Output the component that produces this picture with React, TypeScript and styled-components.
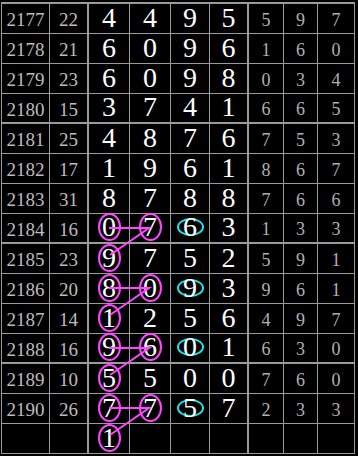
import { FC } from 'react';
import styled, { createGlobalStyle } from 'styled-components';

type Mark = 'none' | 'pink' | 'cyan';

interface RowData {
  issue: string;
  sum: string;
  big: string[];
  small: string[];
  marks?: Mark[];
}

const rows: RowData[] = [
  { issue: '2177', sum: '22', big: ['4', '4', '9', '5'], small: ['5', '9', '7'] },
  { issue: '2178', sum: '21', big: ['6', '0', '9', '6'], small: ['1', '6', '0'] },
  { issue: '2179', sum: '23', big: ['6', '0', '9', '8'], small: ['0', '3', '4'] },
  { issue: '2180', sum: '15', big: ['3', '7', '4', '1'], small: ['6', '6', '5'] },
  { issue: '2181', sum: '25', big: ['4', '8', '7', '6'], small: ['7', '5', '3'] },
  { issue: '2182', sum: '17', big: ['1', '9', '6', '1'], small: ['8', '6', '7'] },
  { issue: '2183', sum: '31', big: ['8', '7', '8', '8'], small: ['7', '6', '6'] },
  { issue: '2184', sum: '16', big: ['0', '7', '6', '3'], small: ['1', '3', '3'], marks: ['pink', 'pink', 'cyan'] },
  { issue: '2185', sum: '23', big: ['9', '7', '5', '2'], small: ['5', '9', '1'], marks: ['pink'] },
  { issue: '2186', sum: '20', big: ['8', '0', '9', '3'], small: ['9', '6', '1'], marks: ['pink', 'pink', 'cyan'] },
  { issue: '2187', sum: '14', big: ['1', '2', '5', '6'], small: ['4', '9', '7'], marks: ['pink'] },
  { issue: '2188', sum: '16', big: ['9', '6', '0', '1'], small: ['6', '3', '0'], marks: ['pink', 'pink', 'cyan'] },
  { issue: '2189', sum: '10', big: ['5', '5', '0', '0'], small: ['7', '6', '0'], marks: ['pink'] },
  { issue: '2190', sum: '26', big: ['7', '7', '5', '7'], small: ['2', '3', '3'], marks: ['pink', 'pink', 'cyan'] },
  { issue: '', sum: '', big: ['1', '', '', ''], small: ['', '', ''], marks: ['pink'] },
];

// links: row index whose first two digits are joined, then down to next row
const links = [7, 9, 11, 13];

const GlobalStyle = createGlobalStyle`
  html, body {
    margin: 0;
    padding: 0;
    background: #000;
  }
`;

const Page = styled.div`
  position: relative;
  width: 358px;
  height: 456px;
  background: #000;
  overflow: hidden;
`;

const Table = styled.div`
  margin: 2px 0 0 1px;
  display: grid;
  grid-template-columns: 48px 39px 41px 41px 39px 39px 35px 34px 37px;
  border-left: 1px solid #9a9a9a;
  border-top: 2px solid #9a9a9a;
  width: max-content;
`;

const Cell = styled.div<{ $thickRight?: boolean; $thickBottom?: boolean }>`
  box-sizing: border-box;
  height: 30px;
  display: flex;
  align-items: center;
  justify-content: center;
  border-right: ${(p) => (p.$thickRight ? 2 : 1)}px solid #9a9a9a;
  border-bottom: ${(p) => (p.$thickBottom ? 2 : 1)}px solid #9a9a9a;
  font-family: 'Liberation Serif', 'Times New Roman', serif;
`;

const Info = styled.span`
  font-size: 19px;
  color: #bcbcbc;
  padding-top: 3px;
`;

const Big = styled.span<{ $mark: Mark }>`
  box-sizing: border-box;
  display: inline-flex;
  align-items: center;
  justify-content: center;
  font-size: 28px;
  line-height: 1;
  color: #fff;
  margin-top: -2px;
  width: ${(p) => (p.$mark === 'cyan' ? 27 : 23)}px;
  height: ${(p) => (p.$mark === 'cyan' ? 18 : 28)}px;
  border-radius: 50%;
  border: 2px solid
    ${(p) => (p.$mark === 'pink' ? '#ff45ff' : p.$mark === 'cyan' ? '#18e8ec' : 'transparent')};
`;

const Small = styled.span`
  font-size: 18px;
  color: #b0b0b0;
  padding-top: 3px;
`;

const Overlay = styled.svg`
  position: absolute;
  left: 0;
  top: 0;
  pointer-events: none;
`;

const Row: FC<{ data: RowData; index: number }> = ({ data, index }) => {
  const thick = index % 4 === 3;
  return (
    <>
      <Cell $thickBottom={thick}>
        <Info>{data.issue}</Info>
      </Cell>
      <Cell $thickBottom={thick} $thickRight>
        <Info>{data.sum}</Info>
      </Cell>
      {data.big.map((d, i) => (
        <Cell key={`b${i}`} $thickBottom={thick} $thickRight={i === 3}>
          <Big $mark={data.marks?.[i] ?? 'none'}>{d}</Big>
        </Cell>
      ))}
      {data.small.map((d, i) => (
        <Cell key={`s${i}`} $thickBottom={thick}>
          <Small>{d}</Small>
        </Cell>
      ))}
    </>
  );
};

export default function App() {
  const rowY = (r: number) => 4 + 30 * r + 14;
  return (
    <Page>
      <GlobalStyle />
      <Table>
        {rows.map((r, i) => (
          <Row key={i} data={r} index={i} />
        ))}
      </Table>
      <Overlay width={358} height={456}>
        {links.map((r) => {
          const y = rowY(r);
          return (
            <polyline
              key={r}
              points={`109,${y} 149,${y} 110,${y + 27}`}
              fill="none"
              stroke="#ff45ff"
              strokeWidth={2}
            />
          );
        })}
      </Overlay>
    </Page>
  );
}
